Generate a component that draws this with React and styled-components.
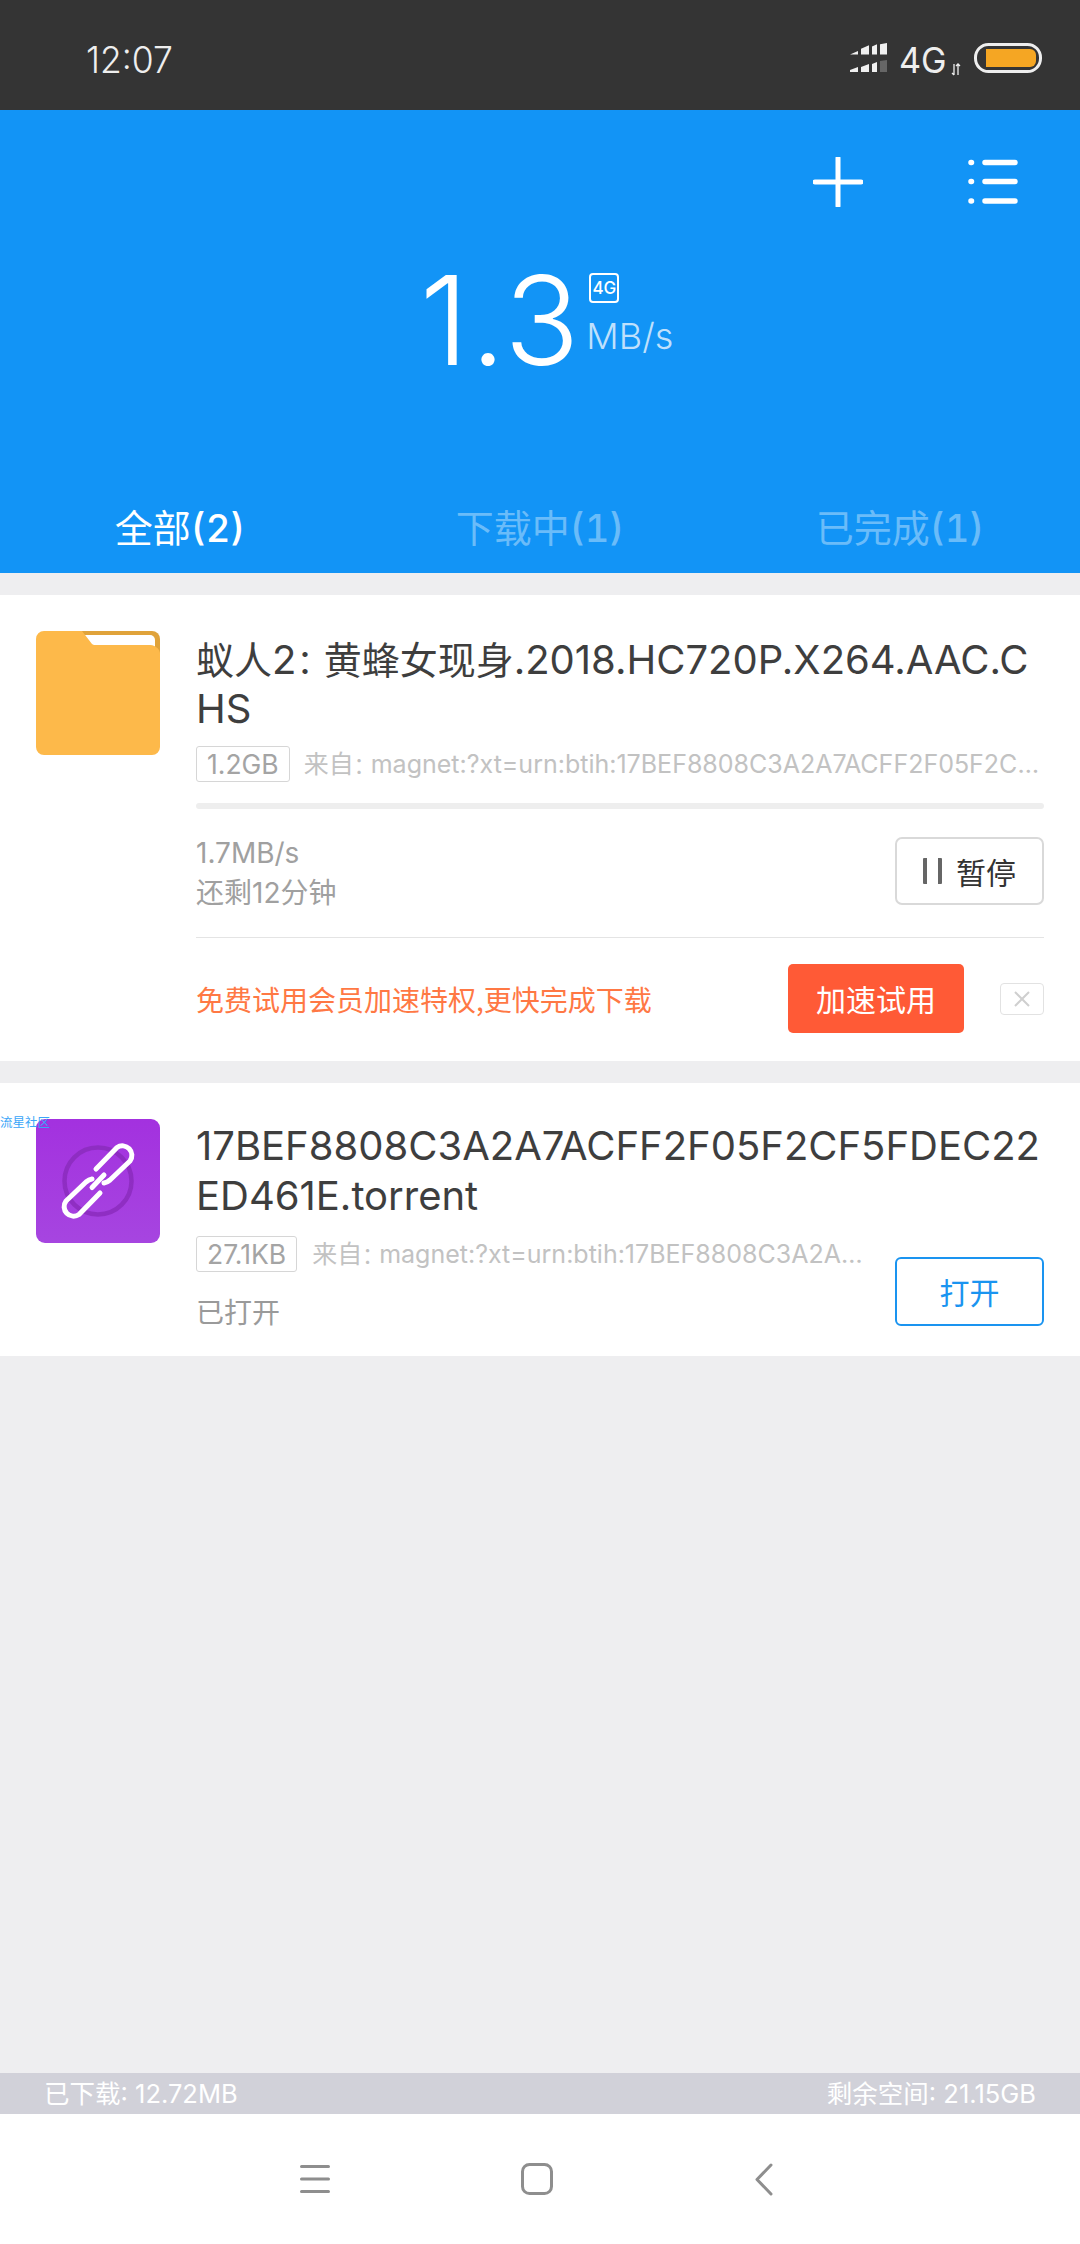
import React from 'react';
import styled, { createGlobalStyle } from 'styled-components';

const Global = createGlobalStyle`
  html, body { margin: 0; padding: 0; background: #eeeef0; }
  body { font-family: Inter, "Noto Sans CJK SC", sans-serif; }
  * { box-sizing: border-box; }
`;
const Page = styled.div`
  width: 1080px; height: 2244px; display: flex; flex-direction: column; background: #eeeef0; overflow: hidden; position: relative;
`;
const StatusBar = styled.div`
  height: 110px; flex: none; background: #343434; display: flex; align-items: center; justify-content: space-between;
  padding: 0 38px 0 86px; color: #eee;
`;
const Time = styled.span`
  font: 300 37px/1 Inter, sans-serif; transform: scaleX(.96); transform-origin: left; margin-top: 9px;
`;
const StatusRight = styled.div`
  display: flex; align-items: flex-start; height: 30px; margin-top: 6px;
`;
const Net = styled.span`
  font: 400 36px/1 Inter, sans-serif; margin: -1px 0 0 12px; transform: scaleX(.95); transform-origin: left; width: 52px;
`;
const Header = styled.div`
  height: 463px; flex: none; background: #1294f6; color: #fff; display: flex; flex-direction: column;
`;
const Actions = styled.div`
  height: 50px; margin-top: 47px; flex: none; display: flex; justify-content: flex-end; align-items: center; gap: 105px; padding-right: 62px;
`;
const Speed = styled.div`
  display: flex; align-items: flex-start; justify-content: center; padding: 51px 0 0 13px;
`;
const SpeedValue = styled.span`
  font: 300 124px/1 Inter, sans-serif; letter-spacing: 2px;
`;
const SpeedSide = styled.div`
  display: flex; flex-direction: column; align-items: flex-start; margin-left: 8px; padding-top: 15px;
`;
const NetBadge = styled.span`
  width: 30px; height: 30px; border: 2px solid #fff; border-radius: 4px; font: 500 17px/26px Inter, sans-serif; text-align: center;
`;
const Unit = styled.span`
  font: 300 36px/1 Inter, sans-serif; color: #bfe0fc; margin: 15px 0 0 -3px;
`;
const Tabs = styled.div`
  margin-top: auto; height: 90px; display: grid; grid-template-columns: repeat(3, 1fr);
`;
const Tab = styled.div`
  text-align: center; font: 400 38px/86px "Noto Sans CJK SC", sans-serif;
  color: ${p => (p.$active ? '#fff' : 'rgba(255,255,255,.38)')};
`;
const Count = styled.span`
  font-family: Inter, sans-serif; font-weight: 500; font-variant-numeric: tabular-nums;
`;
const Card = styled.div`
  background: #fff; margin-top: 22px; display: flex; padding: 36px 36px 0; height: ${p => p.$h}px; flex: none;
`;
const Thumb = styled.div`
  width: 124px; height: 124px; flex: none; margin-right: 36px;
`;
const Body = styled.div`
  flex: 1; min-width: 0; display: flex; flex-direction: column;
`;
const Title = styled.div`
  font: 400 40px/${p => p.$lh}px Inter, "Noto Sans CJK SC", sans-serif; color: #3e3e3e; word-break: break-all; margin-top: 2px; height: ${p => p.$h}px;
`;
const Cn = styled.span`
  font-family: "Noto Sans CJK SC", sans-serif; font-size: 38px;
`;
const Colon = styled.span`
  font-family: "Noto Sans CJK SC", sans-serif; font-size: .85em; letter-spacing: -.2em;
`;
const Meta = styled.div`
  display: flex; align-items: center; margin-top: 12px; height: 36px; flex: none;
`;
const Size = styled.span`
  border: 1px solid #d6d6d6; border-radius: 3px; color: #a4a4a4; height: 36px; padding: 0 10px; flex: none;
  font: 400 26.500px/34px Inter, sans-serif;
`;
const Source = styled.span`
  margin-left: ${p => p.$ml}px; font: 400 25px/36px Inter, "Noto Sans CJK SC", sans-serif; color: #c2c2c2; width: ${p => p.$w}px; overflow: hidden; white-space: nowrap; text-overflow: ellipsis;
`;
const Progress = styled.div`
  height: 6px; background: #eeeeee; border-radius: 3px; margin-top: 21px; flex: none;
`;
const StatsRow = styled.div`
  display: flex; justify-content: space-between; align-items: flex-start; margin-top: 24px; height: 104px; flex: none;
`;
const Stats = styled.div`
  font: 400 28px/40px Inter, "Noto Sans CJK SC", sans-serif; color: #a0a0a0;
`;
const GhostButton = styled.div`
  width: 149px; height: 68px; border: 2px solid #d9d9d9; border-radius: 7px; display: flex; align-items: center; justify-content: center; gap: 14px;
  font: 400 30px/1 "Noto Sans CJK SC", sans-serif; color: #333; margin-top: 4px;
`;
const PauseIcon = styled.span`
  width: 19px; height: 26px; border-left: 4px solid #666; border-right: 4px solid #666; border-radius: 1px;
`;
const Divider = styled.div`
  height: 1px; background: #e4e4e4; flex: none;
`;
const Promo = styled.div`
  display: flex; align-items: center; margin-top: 26px; height: 69px; flex: none;
`;
const PromoText = styled.span`
  font: 400 28px/1 "Noto Sans CJK SC", sans-serif; color: #ff7844; flex: 1;
`;
const PromoButton = styled.div`
  width: 176px; height: 69px; border-radius: 5px; background: #ff5a36; color: #fff; text-align: center; font: 400 30px/69px "Noto Sans CJK SC", sans-serif;
`;
const CloseBox = styled.div`
  width: 44px; height: 32px; margin-left: 36px; border: 1px solid #e2e2e2; border-radius: 4px; display: flex; align-items: center; justify-content: center;
`;
const FooterRow = styled.div`
  display: flex; justify-content: space-between; align-items: flex-start; margin-top: -15px;
`;
const Opened = styled.div`
  font: 400 28px/1 "Noto Sans CJK SC", sans-serif; color: #9a9a9a; margin-top: 40px;
`;
const OpenButton = styled.div`
  width: 149px; height: 69px; border: 2px solid #1a94f0; border-radius: 6px; color: #1a94f0; text-align: center; font: 400 30px/65px "Noto Sans CJK SC", sans-serif;
`;
const Watermark = styled.span`
  position: absolute; left: 0; top: 1116px; font: 400 12.5px/1 "Noto Sans CJK SC", sans-serif; color: #3aa6f8;
`;
const Spacer = styled.div`flex: 1;`;
const Storage = styled.div`
  height: 41px; flex: none; background: #d1d1d9; color: #fff; display: flex; justify-content: space-between; padding: 0 44px; font: 400 25.500px/41px Inter, "Noto Sans CJK SC", sans-serif;
`;
const NavBar = styled.div`
  height: 130px; flex: none; background: #fff; display: flex; justify-content: center; align-items: center; padding-right: 6px;
`;
const NavSlot = styled.div`
  width: 222px; display: flex; justify-content: center; padding-left: ${p => p.$shift || 0}px;
`;
const ArrowsWrap = styled.span`
  width: 10px; height: 13px; margin: 17px 13px 0 0; display: block;
`;

const Signal = () => (
  <svg width="37" height="30" viewBox="0 0 37 30">
    <g fill="#f0f0f0">
      <path d="M0 10l8-3v3zM11 10V5l8-3v8zM22 10V3l5-2v9zM30 10V1l7-1v10z" transform="scale(1 1.150)" />
      <path d="M0 29v-2l8-3v5zM11 29v-5l8-3v8zM22 29v-8l5-2v10z" />
    </g>
    <path d="M30 29V18l7-1v12z" fill="#666" />
  </svg>
);
const Battery = () => (
  <svg width="68" height="30" viewBox="0 0 68 30">
    <rect x="1.500" y="1.500" width="65" height="27" rx="13" fill="none" stroke="#eee" strokeWidth="3" />
    <path d="M12 6h44a6 6 0 0 1 6 6v6a6 6 0 0 1-6 6H12z" fill="#f5a623" />
  </svg>
);
const Arrows = () => (
  <ArrowsWrap>
    <svg width="10" height="13" viewBox="0 0 10 13">
      <path d="M3 1v11M1 10l2 2M7 12V1M5 3l2-2 2 2" stroke="#eee" strokeWidth="1.300" fill="none" />
    </svg>
  </ArrowsWrap>
);
const Plus = () => (
  <svg width="50" height="50" viewBox="0 0 50 50">
    <path d="M25 1v48M2 25h46" stroke="#fff" strokeWidth="5" strokeLinecap="round" />
  </svg>
);
const ListIcon = () => (
  <svg width="50" height="46" viewBox="0 0 50 46">
    <g stroke="#fff" strokeWidth="5.500" strokeLinecap="round">
      <path d="M3 3.500h.5M3 22.500h.5M3 42h.5" />
      <path d="M17 3.500h30M17 22.500h30M17 42h30" />
    </g>
  </svg>
);
const Folder = () => (
  <svg width="124" height="124" viewBox="0 0 124 124">
    <path d="M8 0h108a8 8 0 0 1 8 8v20H40z" fill="#e0a33a" />
    <path d="M48 4h66a5 5 0 0 1 5 5v10H56z" fill="#fff" />
    <path d="M8 0h38l10 13a4 4 0 0 0 3 1h55a10 10 0 0 1 10 12v90a8 8 0 0 1-8 8H8a8 8 0 0 1-8-8V8a8 8 0 0 1 8-8z" fill="#fdb94a" />
  </svg>
);
const LinkThumb = () => (
  <svg width="124" height="124" viewBox="0 0 124 124">
    <defs>
      <linearGradient id="pg" x1="0" y1="0" x2="0" y2="1">
        <stop offset="0" stopColor="#a331df" />
        <stop offset="1" stopColor="#a645e0" />
      </linearGradient>
    </defs>
    <rect width="124" height="124" rx="9" fill="url(#pg)" />
    <circle cx="62" cy="62" r="33.500" fill="none" stroke="#8b2cbd" strokeWidth="4.500" opacity=".85" />
    <g fill="none" stroke="#fff" strokeWidth="5" strokeLinecap="round" strokeLinejoin="round">
      <path d="M60 50L81 28.500a9.500 9.500 0 0 1 13 13.500L74 61q-3 2.500-6 3" />
      <path d="M60 50L81 28.500a9.500 9.500 0 0 1 13 13.500L74 61q-3 2.500-6 3" transform="rotate(180 62 62)" />
      <path d="M56 68.500L68 56" />
    </g>
  </svg>
);
const Cross = () => (
  <svg width="16" height="16" viewBox="0 0 16 16">
    <path d="M1 1l14 14M15 1L1 15" stroke="#cfcfcf" strokeWidth="2" />
  </svg>
);
const NavMenu = () => (
  <svg width="30" height="30" viewBox="0 0 30 30">
    <path d="M1.500 2.500h27M1.500 15h27M1.500 27.500h27" stroke="#8e8e8e" strokeWidth="3" strokeLinecap="round" />
  </svg>
);
const NavHome = () => (
  <svg width="32" height="32" viewBox="0 0 32 32">
    <rect x="1.500" y="1.500" width="29" height="29" rx="7" fill="none" stroke="#8e8e8e" strokeWidth="3" />
  </svg>
);
const NavBack = () => (
  <svg width="18" height="33" viewBox="0 0 18 33">
    <path d="M16 2L2 16.500 16 31" fill="none" stroke="#8e8e8e" strokeWidth="3" strokeLinecap="round" strokeLinejoin="round" />
  </svg>
);

export default function App() {
  return (
    <Page>
      <Global />
      <StatusBar>
        <Time>12:07</Time>
        <StatusRight>
          <Signal />
          <Net>4G</Net>
          <Arrows />
          <Battery />
        </StatusRight>
      </StatusBar>
      <Header>
        <Actions>
          <Plus />
          <ListIcon />
        </Actions>
        <Speed>
          <SpeedValue>1.3</SpeedValue>
          <SpeedSide>
            <NetBadge>4G</NetBadge>
            <Unit>MB/s</Unit>
          </SpeedSide>
        </Speed>
        <Tabs>
          <Tab $active>全部<Count>(2)</Count></Tab>
          <Tab>下载中<Count>(1)</Count></Tab>
          <Tab>已完成<Count>(1)</Count></Tab>
        </Tabs>
      </Header>
      <Card $h={466}>
        <Thumb><Folder /></Thumb>
        <Body>
          <Title $lh={49} $h={101}><Cn>蚁人</Cn>2<Colon>：</Colon><Cn>黄蜂女现身</Cn>.2018.HC720P.X264.AAC.CHS</Title>
          <Meta>
            <Size>1.2GB</Size>
            <Source $w={737} $ml={14}>来自<Colon>：</Colon>magnet:?xt=urn:btih:17BEF8808C3A2A7ACFF2F05F2CF5FDEC22ED461E</Source>
          </Meta>
          <Progress />
          <StatsRow>
            <Stats>1.7MB/s<br />还剩12分钟</Stats>
            <GhostButton><PauseIcon />暂停</GhostButton>
          </StatsRow>
          <Divider />
          <Promo>
            <PromoText>免费试用会员加速特权,更快完成下载</PromoText>
            <PromoButton>加速试用</PromoButton>
            <CloseBox><Cross /></CloseBox>
          </Promo>
        </Body>
      </Card>
      <Card $h={273}>
        <Thumb><LinkThumb /></Thumb>
        <Body>
          <Title $lh={50} $h={103}>17BEF8808C3A2A7ACFF2F05F2CF5FDEC22ED461E.torrent</Title>
          <Meta>
            <Size>27.1KB</Size>
            <Source $w={552} $ml={15}>来自<Colon>：</Colon>magnet:?xt=urn:btih:17BEF8808C3A2A7ACFF2F05F2CF5FDEC22ED461E</Source>
          </Meta>
          <FooterRow>
            <Opened>已打开</Opened>
            <OpenButton>打开</OpenButton>
          </FooterRow>
        </Body>
      </Card>
      <Watermark>流星社区</Watermark>
      <Spacer />
      <Storage>
        <span>已下载: 12.72MB</span>
        <span>剩余空间: 21.15GB</span>
      </Storage>
      <NavBar>
        <NavSlot><NavMenu /></NavSlot>
        <NavSlot><NavHome /></NavSlot>
        <NavSlot $shift={10}><NavBack /></NavSlot>
      </NavBar>
    </Page>
  );
}
